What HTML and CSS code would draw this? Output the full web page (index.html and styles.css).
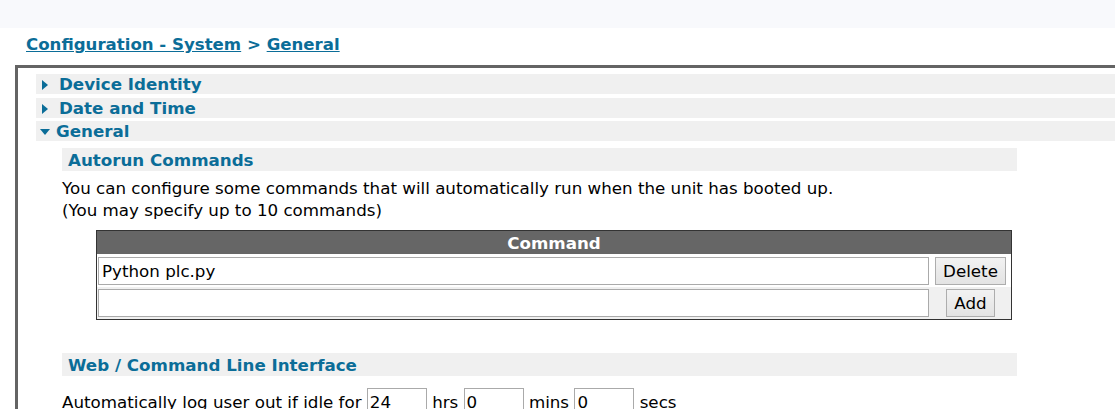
FILE: index.html
```html
<!DOCTYPE html>
<html>
<head>
<meta charset="utf-8">
<link rel="stylesheet" href="styles.css">
</head>
<body>
<div class="topbar"></div>
<div class="crumbs"><a href="#">Configuration - System</a> &gt; <a href="#">General</a></div>
<div class="main">
  <div class="sect"><span class="tri-r"></span>Device Identity</div>
  <div class="sect"><span class="tri-r"></span>Date and Time</div>
  <div class="sect open"><span class="tri-d"></span>General</div>
  <div class="body">
    <div class="sub">Autorun Commands</div>
    <p class="para">You can configure some commands that will automatically run when the unit has booted up.<br>(You may specify up to 10 commands)</p>
    <table class="cmds">
      <thead><tr><th colspan="2">Command</th></tr></thead>
      <tbody>
        <tr><td class="c-in"><input class="tin" type="text" value="Python plc.py"></td><td class="c-btn"><button class="btn">Delete</button></td></tr>
        <tr class="alt"><td class="c-in"><input class="tin" type="text" value=""></td><td class="c-btn"><button class="btn">Add</button></td></tr>
      </tbody>
    </table>
    <div class="sub sub2">Web / Command Line Interface</div>
    <div class="idle">Automatically log user out if idle for <input class="sin" type="text" value="24"> hrs <input class="sin" type="text" value="0"> mins <input class="sin" type="text" value="0"> secs</div>
  </div>
</div>
</body>
</html>
```
FILE: styles.css
```css
html, body { margin: 0; padding: 0; overflow: hidden; background: #fff; }
body { font-family: "DejaVu Sans", Verdana, sans-serif; color: #000; width: 1115px; height: 409px; }
.topbar { height: 28px; background: #f8f9fc; }
.crumbs { padding: 6px 0 0 26px; height: 37px; box-sizing: border-box; font-weight: bold; font-size: 16.6px; line-height: 22px; color: #0b6d98; }
.crumbs a { color: #0b6d98; text-decoration: underline; }
.main { margin-left: 15px; border-top: 3px solid #646464; border-left: 3px solid #646464; padding: 6px 0 0 18px; }
.sect { height: 20px; background: #f0f0f0; margin-bottom: 4px; font-weight: bold; font-size: 16.7px; line-height: 20px; color: #0b6d98; display: flex; align-items: center; }
.sect.open { margin-top: -1px; margin-bottom: 0; }
.tri-r { width: 0; height: 0; border-top: 5px solid transparent; border-bottom: 5px solid transparent; border-left: 6px solid #0b6d98; margin: 1px 11px 0 6px; }
.tri-d { width: 0; height: 0; border-left: 5.5px solid transparent; border-right: 5.5px solid transparent; border-top: 6px solid #0b6d98; margin: 1px 6px 0 4px; }
.body { padding-left: 26px; padding-top: 7px; }
.sub { width: 955px; height: 23px; background: #f0f0f0; box-sizing: border-box; padding-left: 6px; font-weight: bold; font-size: 16.7px; line-height: 24px; color: #0b6d98; }
.sub2 { margin-top: 33px; }
.para { margin: 6px 0 0 0; font-size: 16.7px; line-height: 22px; }
.cmds { margin: 9px 0 0 34px; width: 916px; border-collapse: collapse; border: 1px solid #333; }
.cmds th { background: #666; color: #fff; font-size: 16.7px; font-weight: bold; height: 23px; line-height: 22px; padding: 0; text-align: center; }
.cmds td { padding: 2px 0 2px 1px; }
.cmds tr:first-child td { padding-top: 3px; }
.cmds tr.alt td { background: #f0f0f0; }
.c-in { width: 831px; }
.c-btn { text-align: center; }
.tin { width: 831px; height: 28px; box-sizing: border-box; border: 1px solid #aaa; font-family: "DejaVu Sans", Verdana, sans-serif; font-size: 16.7px; padding: 0 3px; margin: 0; display: block; }
.btn { font-family: "DejaVu Sans", Verdana, sans-serif; font-size: 16.7px; height: 28px; padding: 0 7px; border: 1px solid #adadad; background: linear-gradient(#f2f2f2, #e3e3e3); color: #000; border-radius: 0; }
.idle { margin-top: 12px; font-size: 16.7px; line-height: 28px; }
.sin { width: 60px; height: 28px; box-sizing: border-box; border: 1px solid #aaa; font-family: "DejaVu Sans", Verdana, sans-serif; font-size: 16.7px; padding: 0 2px; margin: 0; vertical-align: top; }
```
